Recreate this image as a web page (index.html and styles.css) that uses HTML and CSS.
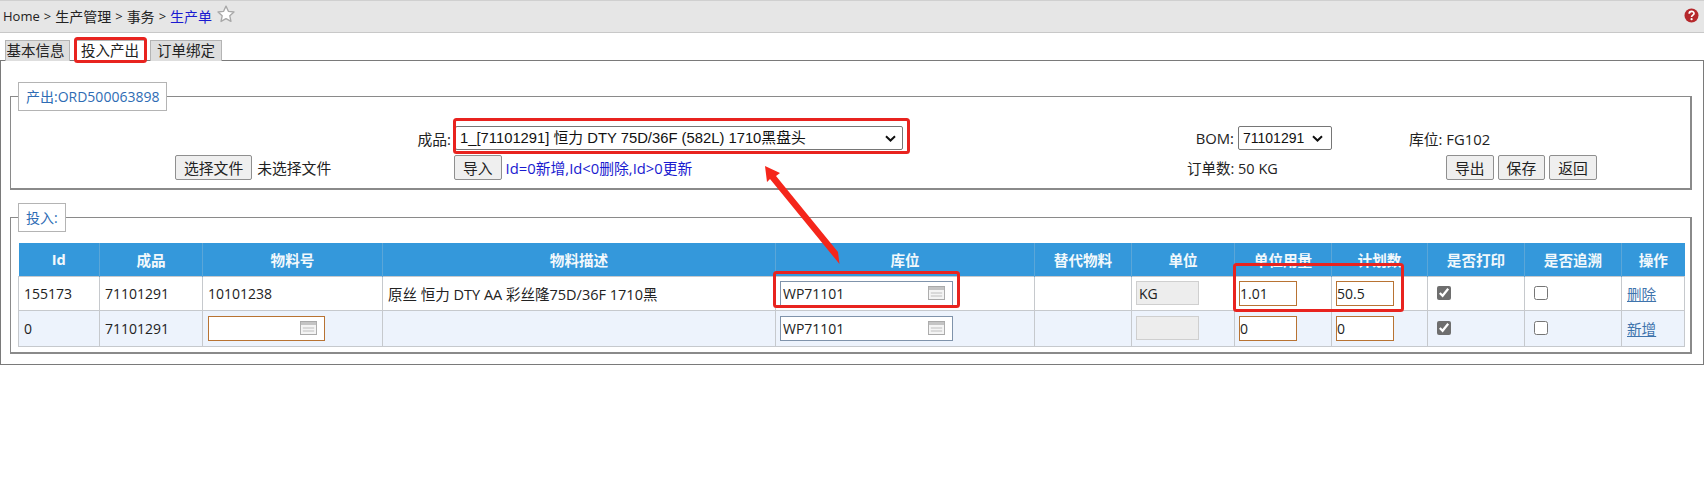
FILE: index.html
```html
<!DOCTYPE html>
<html lang="zh">
<head>
<meta charset="utf-8">
<title>生产单</title>
<link rel="stylesheet" href="styles.css">
</head>
<body>
<header class="topbar">
  <nav class="crumbs">
    <span class="home">Home</span><span class="sep">&gt;</span><span>生产管理</span><span class="sep">&gt;</span><span>事务</span><span class="sep">&gt;</span><span class="current">生产单</span>
    <svg class="star" width="18" height="18" viewBox="0 0 16 16"><path d="M8 1l2.100 4.600 5 .6-3.700 3.400 1 5L8 12.100l-4.400 2.500 1-5L.9 6.200l5-.6z" fill="#fff" stroke="#a8a8a8" stroke-width="1.200" stroke-linejoin="round"/></svg>
  </nav>
  <svg class="help" width="15" height="15" viewBox="0 0 15 15"><circle cx="7.500" cy="7.500" r="7" fill="#b5282c"/><path d="M5.200 5.700c0-3 4.800-3 4.800-.3 0 1.700-2.400 1.800-2.400 3.500" fill="none" stroke="#fff" stroke-width="1.700"/><circle cx="7.600" cy="11.200" r="1.100" fill="#fff"/></svg>
</header>
<div class="tabs">
  <span class="tab">基本信息</span>
  <span class="tab active">投入产出</span>
  <span class="tab">订单绑定</span>
</div>
<main class="panel">
  <fieldset class="group output">
    <legend>产出:ORD500063898</legend>
    <div class="form">
      <label class="f-label">成品:</label>
      <div><select class="product"><option>1_[71101291] 恒力 DTY 75D/36F (582L) 1710黑盘头</option></select></div>
      <label class="f-bom">BOM: <select class="bom"><option>71101291</option></select></label>
      <div class="f-loc">库位: FG102</div>
      <div class="f-file"><button class="btn">选择文件</button><span>未选择文件</span></div>
      <div class="f-import"><button class="btn">导入</button><span class="hint">Id=0新增,Id&lt;0删除,Id&gt;0更新</span></div>
      <div class="f-qty">订单数: 50 KG</div>
      <div class="f-actions"><button class="btn">导出</button><button class="btn">保存</button><button class="btn">返回</button></div>
    </div>
  </fieldset>
  <fieldset class="group input">
    <legend>投入:</legend>
    <table class="grid">
      <colgroup><col class="c1"><col class="c2"><col class="c3"><col class="c4"><col class="c5"><col class="c6"><col class="c7"><col class="c8"><col class="c9"><col class="c10"><col class="c11"><col class="c12"></colgroup>
      <thead>
        <tr><th>Id</th><th>成品</th><th>物料号</th><th>物料描述</th><th>库位</th><th>替代物料</th><th>单位</th><th>单位用量</th><th>计划数</th><th>是否打印</th><th>是否追溯</th><th>操作</th></tr>
      </thead>
      <tbody>
        <tr>
          <td>155173</td><td>71101291</td><td>10101238</td><td class="desc">原丝 恒力 DTY AA 彩丝隆75D/36F 1710黑</td>
          <td class="tight"><div class="lookup"><input class="in-loc" value="WP71101"><svg class="pick" width="17" height="14" viewBox="0 0 18 14" preserveAspectRatio="none"><rect x=".5" y=".5" width="17" height="13" fill="#f4f4f4" stroke="#a9a9a9"/><rect x="1" y="1" width="16" height="3" fill="#c4c4c4"/><path d="M3 7h12M3 10h12" stroke="#bdbdbd"/></svg></div></td>
          <td></td>
          <td class="tight"><input class="in-unit" value="KG" readonly></td>
          <td class="tight"><input class="in-num" value="1.01"></td>
          <td class="tight"><input class="in-num" value="50.5"></td>
          <td><input class="chk" type="checkbox" checked></td>
          <td><input class="chk" type="checkbox"></td>
          <td><a href="#">删除</a></td>
        </tr>
        <tr>
          <td>0</td><td>71101291</td>
          <td><div class="lookup"><input class="in-mat" value=""><svg class="pick" width="17" height="14" viewBox="0 0 18 14" preserveAspectRatio="none"><rect x=".5" y=".5" width="17" height="13" fill="#f4f4f4" stroke="#a9a9a9"/><rect x="1" y="1" width="16" height="3" fill="#c4c4c4"/><path d="M3 7h12M3 10h12" stroke="#bdbdbd"/></svg></div></td>
          <td></td>
          <td class="tight"><div class="lookup"><input class="in-loc" value="WP71101"><svg class="pick" width="17" height="14" viewBox="0 0 18 14" preserveAspectRatio="none"><rect x=".5" y=".5" width="17" height="13" fill="#f4f4f4" stroke="#a9a9a9"/><rect x="1" y="1" width="16" height="3" fill="#c4c4c4"/><path d="M3 7h12M3 10h12" stroke="#bdbdbd"/></svg></div></td>
          <td></td>
          <td class="tight"><input class="in-unit" value="" readonly></td>
          <td class="tight"><input class="in-num" value="0"></td>
          <td class="tight"><input class="in-num" value="0"></td>
          <td><input class="chk" type="checkbox" checked></td>
          <td><input class="chk" type="checkbox"></td>
          <td><a href="#">新增</a></td>
        </tr>
      </tbody>
    </table>
  </fieldset>
</main>
<svg class="marks" width="1704" height="501" viewBox="0 0 1704 501">
  <g fill="none" stroke="#e8231f" stroke-width="3">
    <rect x="75.500" y="38.500" width="70" height="23" rx="2"/>
    <rect x="454.500" y="119.500" width="454" height="33" rx="2"/>
    <rect x="774.500" y="272.500" width="184" height="34" rx="2"/>
    <rect x="1234.500" y="264.500" width="168" height="46" rx="2"/>
  </g>
  <path d="M765 166L780 173L776 176L838 252L839.500 264L828 250L770 179L767 182Z" fill="#f5261b"/>
</svg>
</body>
</html>
```
FILE: styles.css
```css
* { box-sizing: border-box; }
html, body { margin: 0; padding: 0; }
body {
  position: relative;
  width: 1704px;
  height: 501px;
  overflow: hidden;
  background: #fff;
  color: #222;
  font: 14px "Open Sans", "Noto Sans CJK SC", sans-serif;
}
.topbar {
  height: 33px;
  display: flex;
  align-items: center;
  justify-content: space-between;
  padding: 0 5px 2px 3px;
  background: #e6e6e6;
  border-top: 1px solid #d0d0d0;
  border-bottom: 1px solid #c8c8c8;
}
.crumbs { display: flex; align-items: center; }
.home { font-size: 13px; }
.sep { margin: 0 4px; font-size: 13px; }
.current { color: #1a1ad0; }
.star { margin: -4px 0 0 5px; }
.tabs {
  height: 27px;
  display: flex;
  align-items: flex-end;
  gap: 4px;
  padding-left: 5px;
}
.tab {
  width: 65px;
  height: 21px;
  margin-bottom: -1px;
  padding-right: 4px;
  background: #dedede;
  border: 1px solid #b4b4b4;
  border-bottom: 0;
  text-align: center;
  line-height: 20px;
  font-size: 14.500px;
  white-space: nowrap;
}
.tab + .tab { width: 72px; padding-right: 0; }
.tab.active { background: #fff; position: relative; z-index: 1; }
.panel {
  height: 305px;
  border: 1px solid #7a7a7a;
  padding: 21px 11px 0 9px;
}
.group {
  margin: 0;
  padding: 0 0 0 7px;
  border: 2px solid #8a8a8a;
  border-width: 1px 2px 2px 1px;
  min-width: 0;
}
.group legend {
  margin-left: 0;
  padding: 0 7px;
  height: 29px;
  line-height: 27px;
  background: #fff;
  border: 1px solid #b4b4b4;
  color: #2e6cb4;
}
.output { height: 108px; }
.input { height: 151px; margin-top: 13px; }
.form {
  display: grid;
  grid-template-columns: 444px 732px 222px 1fr;
  grid-template-rows: 28px 30px;
  padding-top: 13px;
  margin-left: -7px;
  align-items: center;
  font-size: 14.800px;
}
.f-label { text-align: right; padding-right: 4px; }
.f-bom { justify-self: end; padding-right: 77px; display: flex; align-items: center; gap: 4px; }
.f-file { display: flex; align-items: center; gap: 5px; padding-left: 164px; }
.f-import { display: flex; align-items: center; gap: 4px; margin-left: -1px; }
.f-qty { font-size: 14.500px; }
.hint { color: #1a1ad0; }
.f-actions { display: flex; gap: 4px; padding-left: 37px; }
.btn {
  height: 25px;
  padding: 0 8px;
  background: #efefef;
  border: 1px solid #8f8f8f;
  border-radius: 2px;
  color: #222;
  font: 14.800px "Open Sans", "Noto Sans CJK SC", sans-serif;
  white-space: nowrap;
}
.product, .bom {
  appearance: none;
  height: 24px;
  padding: 0 0 0 4px;
  border: 1px solid #767676;
  border-radius: 2px;
  color: #111;
  background: #fff url("data:image/svg+xml,%3Csvg xmlns='http://www.w3.org/2000/svg' width='11' height='7'%3E%3Cpath d='M1 1.200l4.500 4.300L10 1.200' fill='none' stroke='%23111' stroke-width='2'/%3E%3C/svg%3E") no-repeat;
}
.product {
  width: 448px;
  background-position: right 6px center;
  font: 14.800px "Liberation Sans", "Noto Sans CJK SC", sans-serif;
}
.bom {
  width: 94px;
  background-position: right 8px center;
  font: 14px "Liberation Sans", sans-serif;
}
.grid {
  width: 1666px;
  table-layout: fixed;
  border-collapse: collapse;
  margin-top: 11px;
}
.c1 { width: 81px; } .c2 { width: 103px; } .c3 { width: 180px; } .c4 { width: 393px; }
.c5 { width: 259px; } .c6 { width: 97px; } .c7 { width: 103px; } .c8 { width: 97px; }
.c9 { width: 96px; } .c10 { width: 97px; } .c11 { width: 97px; } .c12 { width: 63px; }
.grid th {
  height: 33px;
  padding: 0;
  background: #3498db;
  border-left: 1px solid #5aa6d8;
  color: #f2f8fc;
  font-size: 14.600px;
  font-weight: 700;
}
.grid th:first-child { border-left: 0; }
.grid td {
  height: 36px;
  padding: 0 0 0 5px;
  border: 1px solid #c6c9cd;
  white-space: nowrap;
}
.grid tbody tr:first-child td { height: 34px; }
.grid td.tight { padding-left: 4px; }
.grid td.desc { font-size: 14.500px; }
.grid tbody tr:nth-child(2) td { background: #edf3fc; }
.lookup { position: relative; display: inline-block; vertical-align: middle; }
.pick { position: absolute; right: 8px; top: 5px; }
input { font: 14px "Open Sans", sans-serif; color: #222; outline: 0; vertical-align: middle; }
.in-loc { width: 173px; height: 25px; padding: 0 2px; border: 1px solid #7f93ab; background: #fff; }
.in-mat { width: 117px; height: 25px; padding: 0 3px; border: 1px solid #b87333; background: #fff; }
.in-num { width: 58px; height: 25px; padding: 0; border: 1px solid #b87333; background: #fff; }
.in-unit { width: 63px; height: 24px; padding: 0 2px; border: 1px solid #cfcfcf; background: #ededed; }
.chk { width: 14px; height: 14px; margin: 0 0 3px 4px; accent-color: #6e6e6e; }
.grid a { color: #3f74ad; font-size: 14.600px; }
.marks { position: absolute; left: 0; top: 0; z-index: 2; pointer-events: none; }
```
